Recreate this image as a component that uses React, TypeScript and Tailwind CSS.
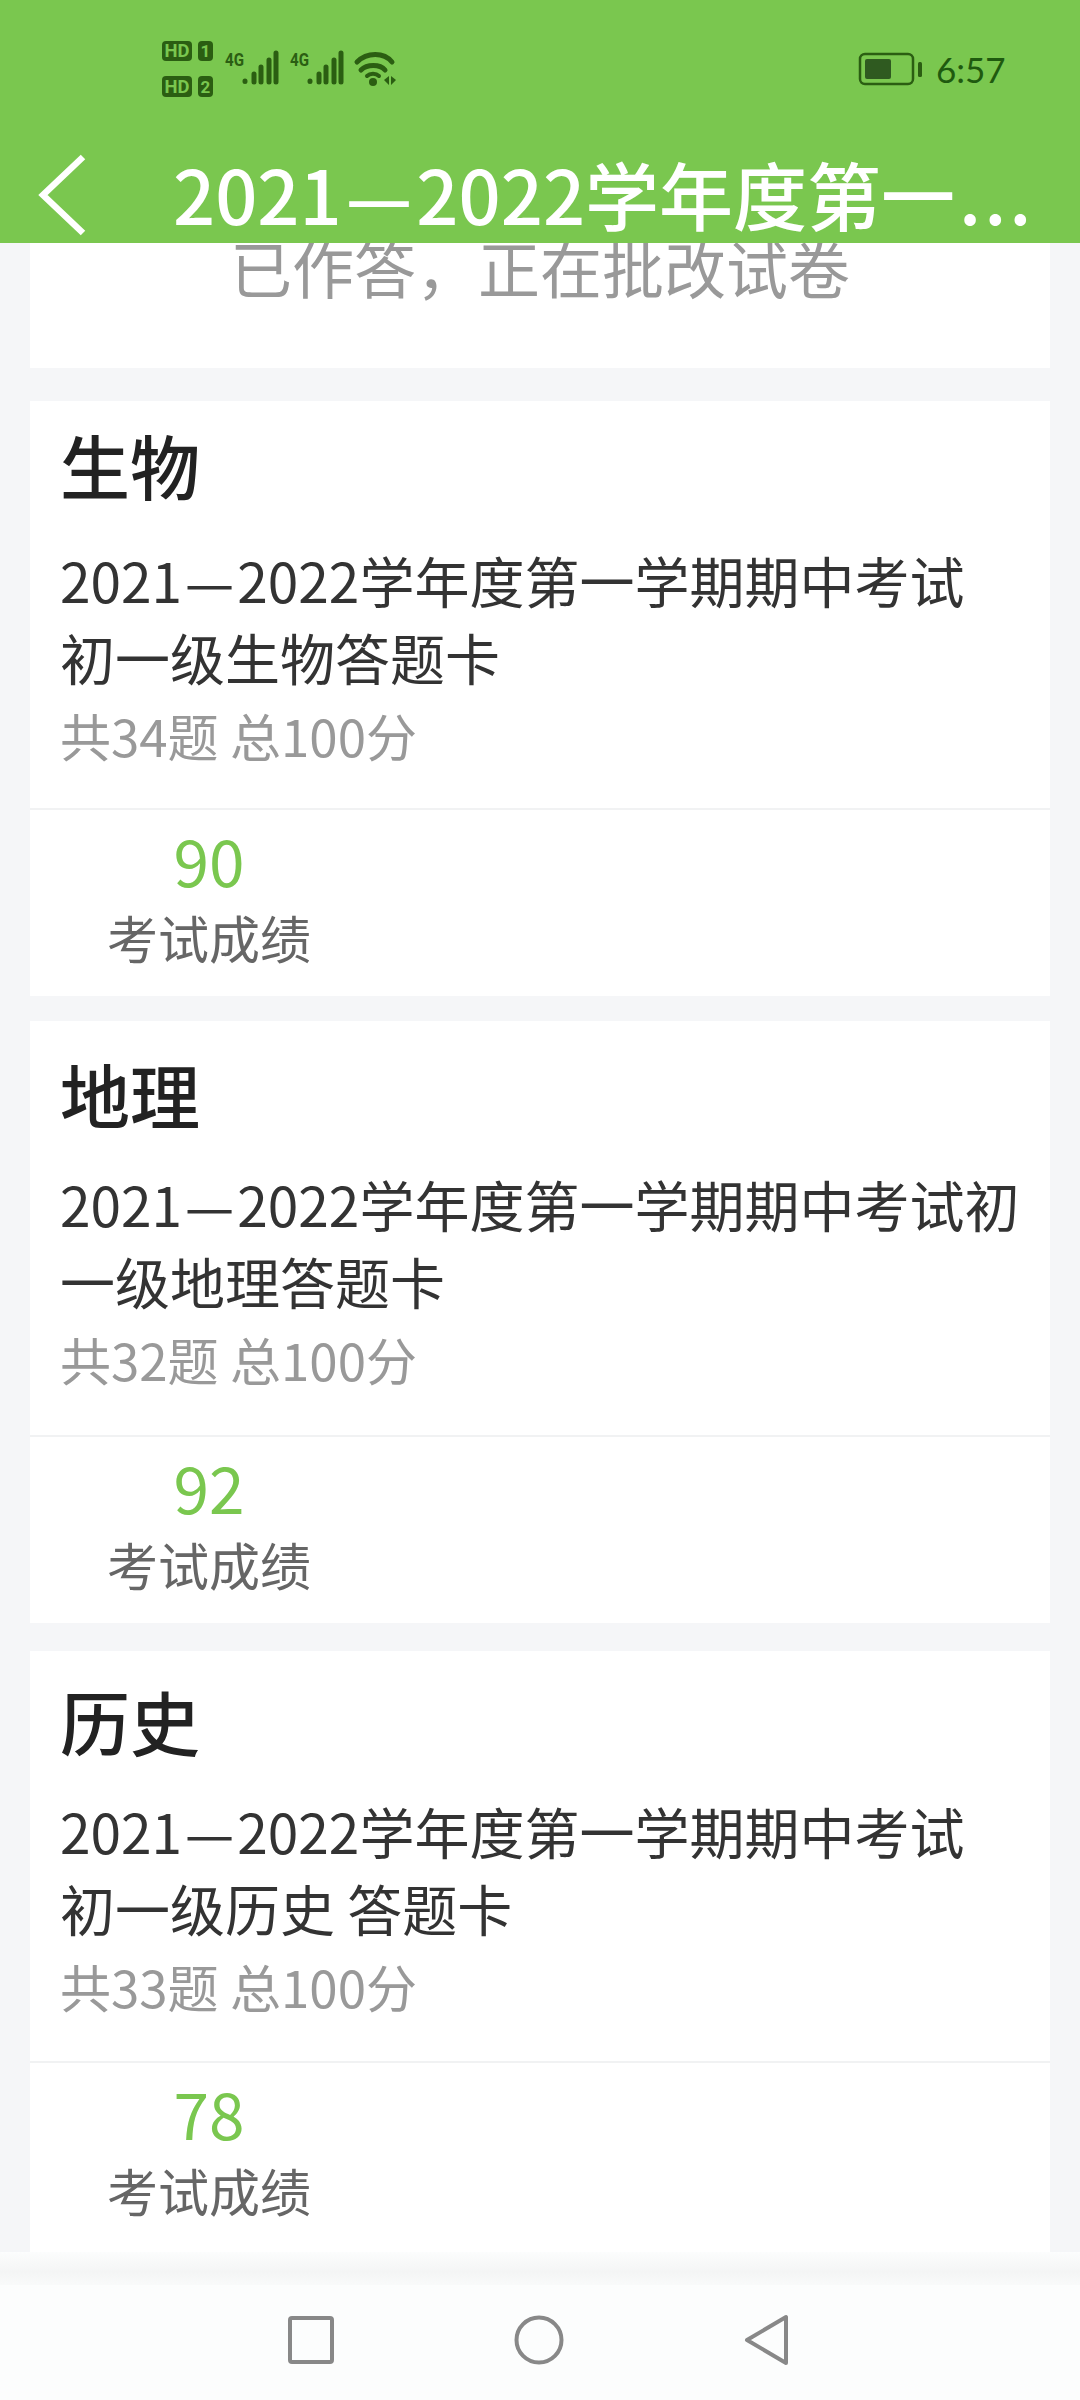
const CJK = "font-['Noto_Sans_CJK_SC',sans-serif]";

type Exam = {
  subject: string;
  title: string;
  meta: string;
  score: string;
  cardCls: string;
  topCls: string;
  bodyCls: string;
  bottomCls: string;
};

const EXAMS: Exam[] = [
  {
    subject: "生物",
    title: "学年度第一学期期中考试 初一级生物答题卡",
    meta: "共34题 总100分",
    score: "90",
    cardCls: "mt-[33px]",
    topCls: "h-[407px] pt-[25px]",
    bodyCls: "mt-[37px]",
    bottomCls: "h-[188px]",
  },
  {
    subject: "地理",
    title: "学年度第一学期期中考试初一级地理答题卡",
    meta: "共32题 总100分",
    score: "92",
    cardCls: "mt-[25px]",
    topCls: "h-[414px] pt-[34px]",
    bodyCls: "mt-[32px]",
    bottomCls: "h-[188px]",
  },
  {
    subject: "历史",
    title: "学年度第一学期期中考试 初一级历史 答题卡",
    meta: "共33题 总100分",
    score: "78",
    cardCls: "mt-[28px]",
    topCls: "h-[410px] pt-[31px]",
    bodyCls: "mt-[32px]",
    bottomCls: "h-[191px]",
  },
];

function StatusIcons() {
  return (
    <svg width="250" height="60" viewBox="0 0 250 60" className="absolute left-[160px] top-[40px]">
      <g fill="#2b5e12">
        <rect x="2" y="1" width="30" height="20" rx="4" />
        <rect x="38" y="1" width="15" height="20" rx="4" />
        <rect x="2" y="36" width="30" height="21" rx="4" />
        <rect x="38" y="36" width="15" height="21" rx="4" />
        <text x="17" y="17" textAnchor="middle" fontSize="18" fontWeight="700" fontFamily="Roboto" fill="#7ac74f" textLength="25" lengthAdjust="spacingAndGlyphs">HD</text>
        <text x="45.5" y="17" textAnchor="middle" fontSize="17" fontWeight="700" fontFamily="Roboto" fill="#7ac74f">1</text>
        <text x="17" y="53" textAnchor="middle" fontSize="18" fontWeight="700" fontFamily="Roboto" fill="#7ac74f" textLength="25" lengthAdjust="spacingAndGlyphs">HD</text>
        <text x="45.5" y="53" textAnchor="middle" fontSize="17" fontWeight="700" fontFamily="Roboto" fill="#7ac74f">2</text>
        <text x="65" y="26" fontSize="19" fontWeight="700" fontFamily="Roboto" textLength="19" lengthAdjust="spacingAndGlyphs">4G</text>
        <text x="130" y="26" fontSize="19" fontWeight="700" fontFamily="Roboto" textLength="19" lengthAdjust="spacingAndGlyphs">4G</text>
      </g>
      <g stroke="#2b5e12" strokeWidth="5" strokeLinecap="round">
        <path d="M85 41v0.5M94 34v8M101 27v15M109 20v22M116 13v29" />
        <path d="M150 41v0.5M159 34v8M166 27v15M174 20v22M181 13v29" />
      </g>
      <g fill="none" stroke="#2b5e12" strokeLinecap="round">
        <path d="M197 22c10-10 27-10 35 0" strokeWidth="5" />
        <path d="M201 30c6-6 19-6 24 0" strokeWidth="5" />
        <path d="M207 36c3-3 9-3 12 0" strokeWidth="4" />
      </g>
      <circle cx="213" cy="42" r="4" fill="#2b5e12" />
      <path d="M224 40l5-4v9zM231 36l5 4-5 5z" fill="#2b5e12" />
    </svg>
  );
}

function BatteryIcon() {
  return (
    <svg width="66" height="36" viewBox="0 0 66 36" className="absolute left-[858px] top-[51px]">
      <rect x="2" y="3" width="53" height="30" rx="5" fill="none" stroke="#2b5e12" strokeWidth="2.500" />
      <rect x="7" y="8" width="26" height="20" rx="2" fill="#2f5a20" />
      <rect x="60" y="11" width="4" height="15" rx="1.500" fill="#2b5e12" />
    </svg>
  );
}

function ExamCard({ exam }: { exam: Exam }) {
  return (
    <section className={`mx-[30px] bg-white ${exam.cardCls}`}>
      <div className={`px-[30px] ${exam.topCls}`}>
        <h2 className="text-[70px] leading-[78px] font-medium text-[#222222]">{exam.subject}</h2>
        <p className={`w-[964px] text-[55px] leading-[77px] text-[#333333] ${exam.bodyCls}`}>
          2021<span className="mx-[3px]">—</span>2022{exam.title}
        </p>
        <p className="mt-[2px] text-[51px] leading-[76px] text-[#999999]">{exam.meta}</p>
      </div>
      <div className={`border-t-2 border-[#f1f2f3] pt-[11px] ${exam.bottomCls}`}>
        <div className="flex w-[358px] flex-col items-center">
          <span className="text-[64px] leading-[77px] text-[#7ac74f]">{exam.score}</span>
          <span className="text-[51px] leading-[78px] text-[#666666]">考试成绩</span>
        </div>
      </div>
    </section>
  );
}

export default function App() {
  return (
    <div className={`flex h-[2400px] w-[1080px] flex-col overflow-hidden bg-[#f5f6f8] ${CJK}`}>
      {/* status bar + title */}
      <header className="relative z-10 h-[243px] shrink-0 bg-[#7ac74f]">
        <StatusIcons />
        <BatteryIcon />
        <span className="absolute left-[936px] top-[45px] font-['Lato',sans-serif] text-[35px] leading-[48px] font-normal text-[#1f5a0f]">
          6:57
        </span>
        <div className="flex h-full items-end">
          <svg width="60" height="90" viewBox="0 0 60 90" className="ml-[36px] mb-[3px] shrink-0">
            <path d="M47 7L7 45l40 38" fill="none" stroke="#ffffff" strokeWidth="6.500" />
          </svg>
          <h1 className="ml-[77px] whitespace-nowrap text-[74px] leading-[100px] font-medium text-white">
            2021<span className="mx-[4px]">—</span>2022学年度第一<span className="ml-[4px] tracking-[3px]">...</span>
          </h1>
        </div>
      </header>

      <main className="h-[2042px] shrink-0 overflow-hidden">
        <section className="mx-[30px] flow-root h-[125px] bg-white">
          <p className="-mt-[21px] pl-[200px] text-[62px] leading-[90px] text-[#999999]">已作答，正在批改试卷</p>
        </section>
        {EXAMS.map((e) => (
          <ExamCard key={e.subject} exam={e} />
        ))}
        <div className="h-[40px] bg-linear-to-b from-[#fcfdfd] via-[#f4f5f5] to-[#fcfdfd]" />
      </main>

      {/* android nav bar */}
      <nav className="flex flex-1 items-center justify-center gap-[180px] bg-[#fcfdfd] pr-[2px] pb-[5px]">
        <svg width="46" height="48" viewBox="0 0 46 48">
          <rect x="2" y="2" width="42" height="44" rx="2" fill="none" stroke="#888888" strokeWidth="4" />
        </svg>
        <svg width="50" height="50" viewBox="0 0 50 50">
          <circle cx="25" cy="25" r="22.500" fill="none" stroke="#888888" strokeWidth="4" />
        </svg>
        <svg width="46" height="52" viewBox="0 0 46 52">
          <path d="M42 3v46L3 26z" fill="none" stroke="#888888" strokeWidth="4" strokeLinejoin="round" />
        </svg>
      </nav>
    </div>
  );
}
